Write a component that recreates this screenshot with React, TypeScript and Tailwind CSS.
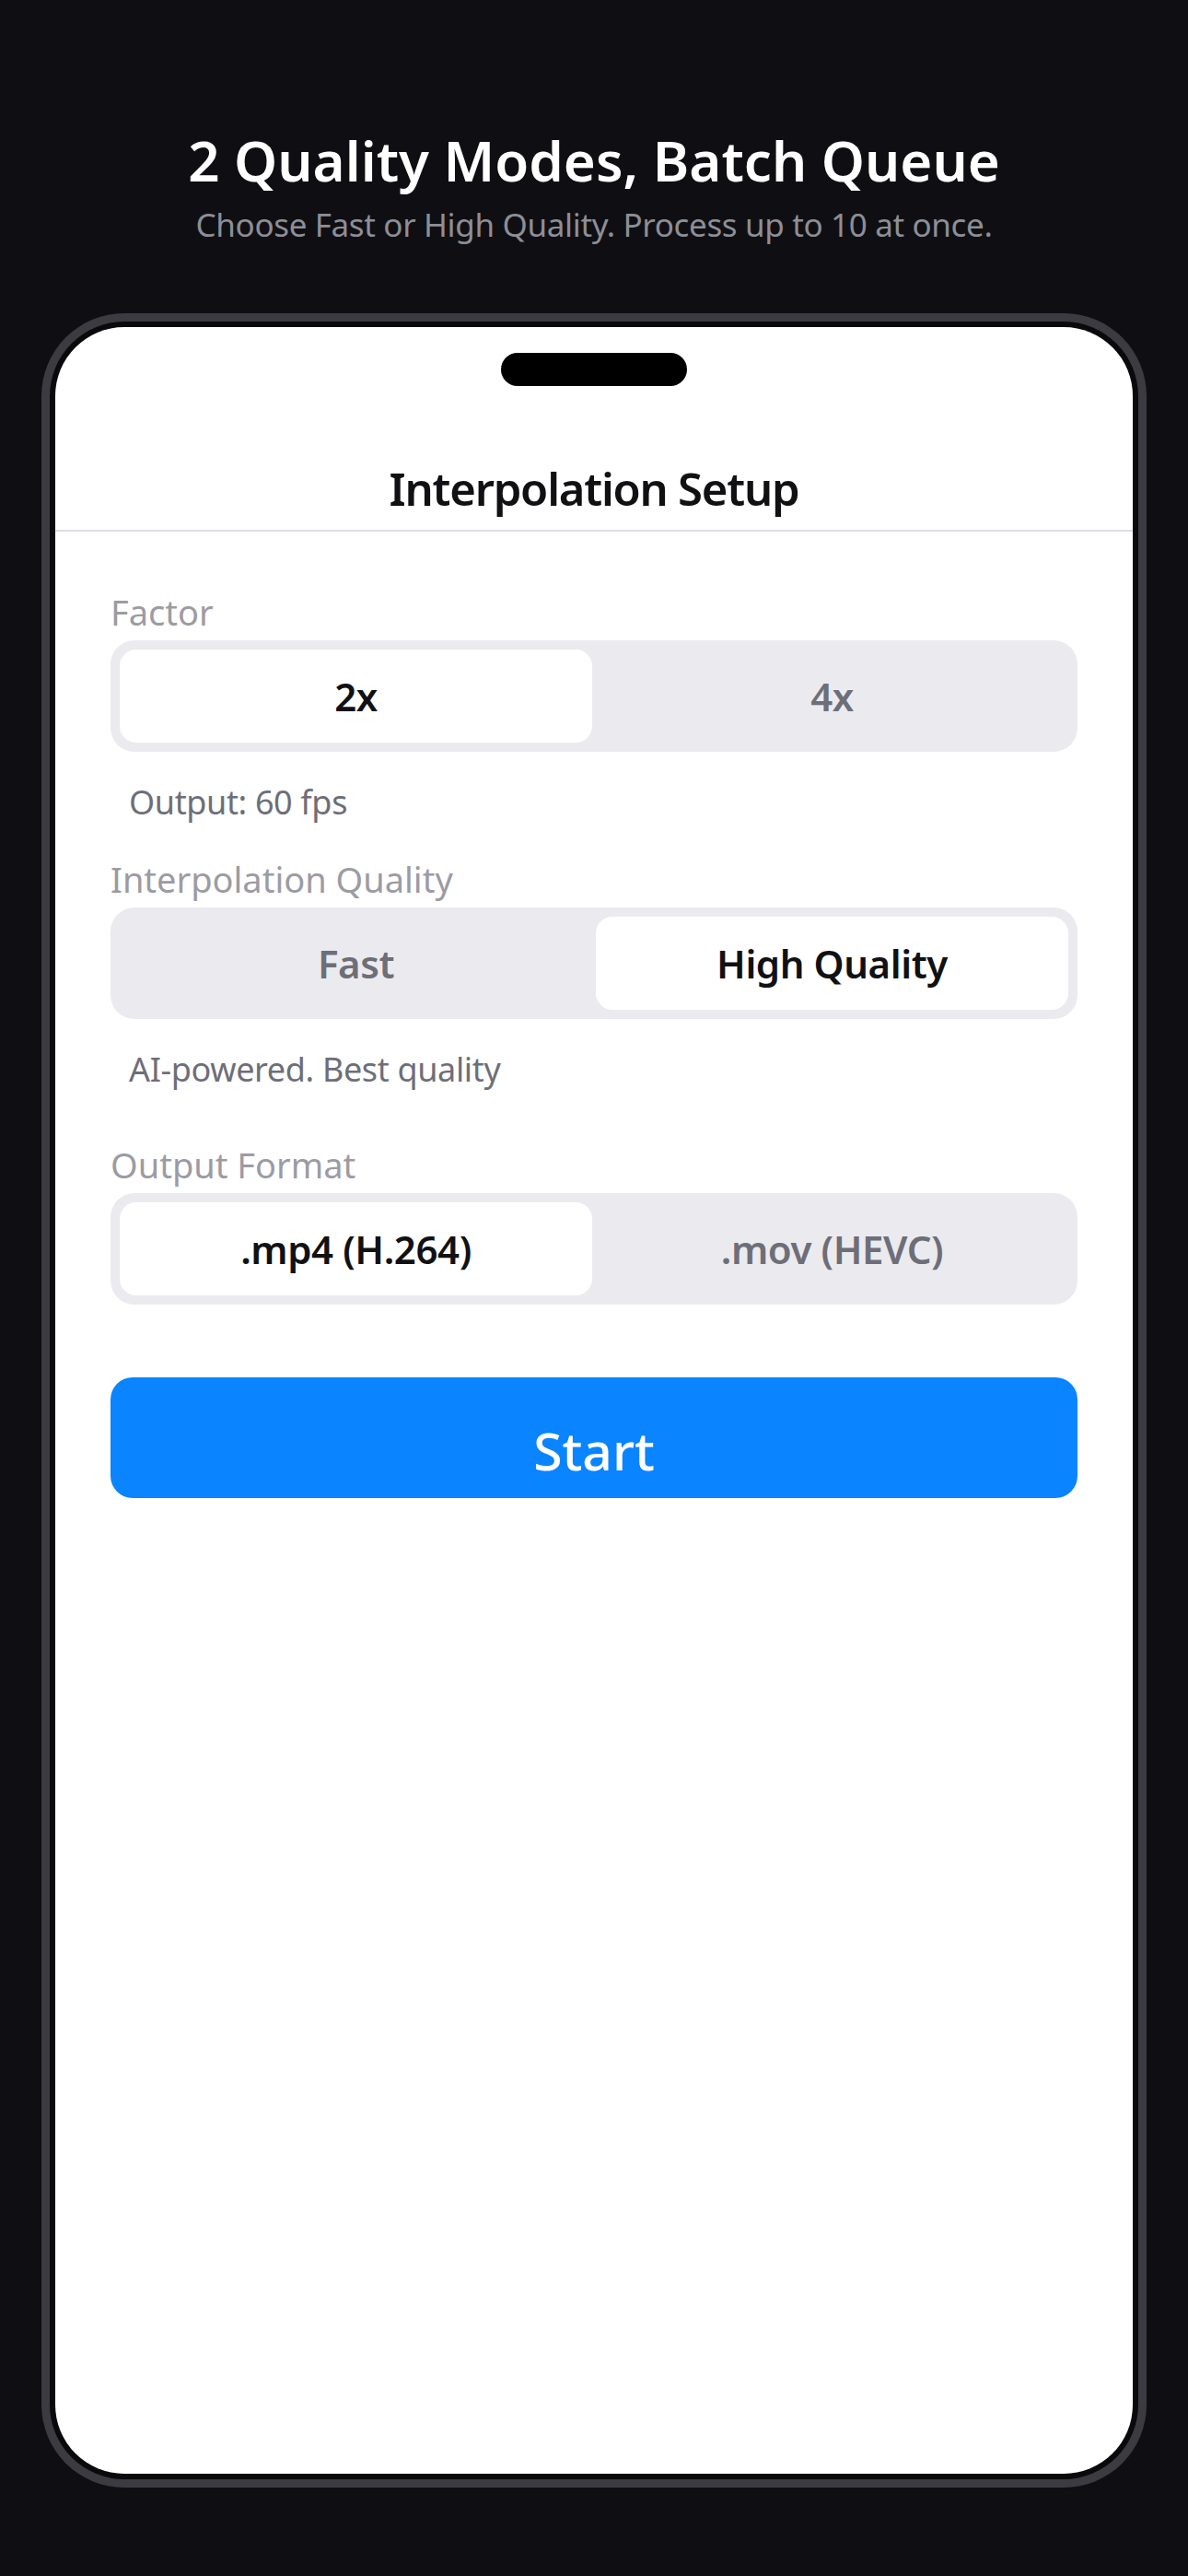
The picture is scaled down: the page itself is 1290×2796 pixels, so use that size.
import { useState } from "react";

const font = { fontFamily: '"Noto Sans", "Open Sans", sans-serif' };

type SegProps = {
  options: string[];
  value: number;
  onChange: (i: number) => void;
};

function Segmented({ options, value, onChange }: SegProps) {
  return (
    <div className="flex h-[121px] gap-[4px] rounded-[26px] bg-[#ebebef] p-[10px]">
      {options.map((opt, i) => (
        <button
          key={opt}
          onClick={() => onChange(i)}
          className={
            i === value
              ? "flex flex-1 items-center justify-center rounded-[18px] bg-white text-[42px] leading-[52px] font-semibold tracking-[-0.01em] text-[#111114]"
              : "flex flex-1 items-center justify-center rounded-[18px] text-[42px] leading-[52px] font-semibold tracking-[-0.01em] text-[#6e6e78]"
          }
        >
          {opt}
        </button>
      ))}
    </div>
  );
}

export default function App() {
  const [factor, setFactor] = useState(0);
  const [quality, setQuality] = useState(1);
  const [format, setFormat] = useState(0);

  return (
    <div className="min-h-screen bg-[#0f0f13] pt-[138px]" style={font}>
      {/* Headline */}
      <h1 className="text-center text-[60px] leading-[72px] font-semibold text-white">
        2 Quality Modes, Batch Queue
      </h1>
      <p className="mt-[12px] text-center text-[35px] leading-[44px] tracking-[-0.01em] text-[#8e8e96]">
        Choose Fast or High Quality. Process up to 10 at once.
      </p>

      {/* Phone frame */}
      <div className="mx-auto mt-[74px] h-[2360px] w-[1200px] rounded-[90px] bg-[#3b3b41] p-[9px]">
        <div className="h-full rounded-[81px] bg-[#0a0a0c] p-[6px]">
          <div className="flex h-full flex-col rounded-[75px] bg-white">
            {/* Dynamic island */}
            <div className="mx-auto mt-[28px] h-[36px] w-[202px] rounded-full bg-black" />

            {/* Nav title */}
            <div className="mt-[80px] border-b-2 border-[#dedee4] pb-[14px]">
              <h2 className="text-center text-[49px] leading-[62px] font-semibold tracking-[-0.025em] text-[#111114]">
                Interpolation Setup
              </h2>
            </div>

            <div className="px-[60px] pt-[64px]">
              <div className="mb-[8px] text-[38px] leading-[46px] text-[#9c9ba3]">Factor</div>
              <Segmented options={["2x", "4x"]} value={factor} onChange={setFactor} />
              <div className="mt-[32px] pl-5 text-[36px] leading-[46px] tracking-[-0.01em] text-[#6e6e78]">
                Output: {factor === 0 ? 60 : 120} fps
              </div>

              <div className="mt-[37px] mb-[8px] text-[38px] leading-[46px] text-[#9c9ba3]">
                Interpolation Quality
              </div>
              <Segmented options={["Fast", "High Quality"]} value={quality} onChange={setQuality} />
              <div className="mt-[32px] pl-5 text-[36px] leading-[46px] tracking-[-0.01em] text-[#6e6e78]">
                {quality === 1 ? "AI-powered. Best quality" : "Quick blend. Faster processing"}
              </div>

              <div className="mt-[57px] mb-[8px] text-[38px] leading-[46px] text-[#9c9ba3]">
                Output Format
              </div>
              <Segmented options={[".mp4 (H.264)", ".mov (HEVC)"]} value={format} onChange={setFormat} />

              <button className="mt-[79px] flex h-[131px] w-full items-center justify-center rounded-[24px] bg-[#0a84ff] pt-[26px] text-[57px] leading-[68px] font-medium text-white">
                Start
              </button>
            </div>
          </div>
        </div>
      </div>
    </div>
  );
}
